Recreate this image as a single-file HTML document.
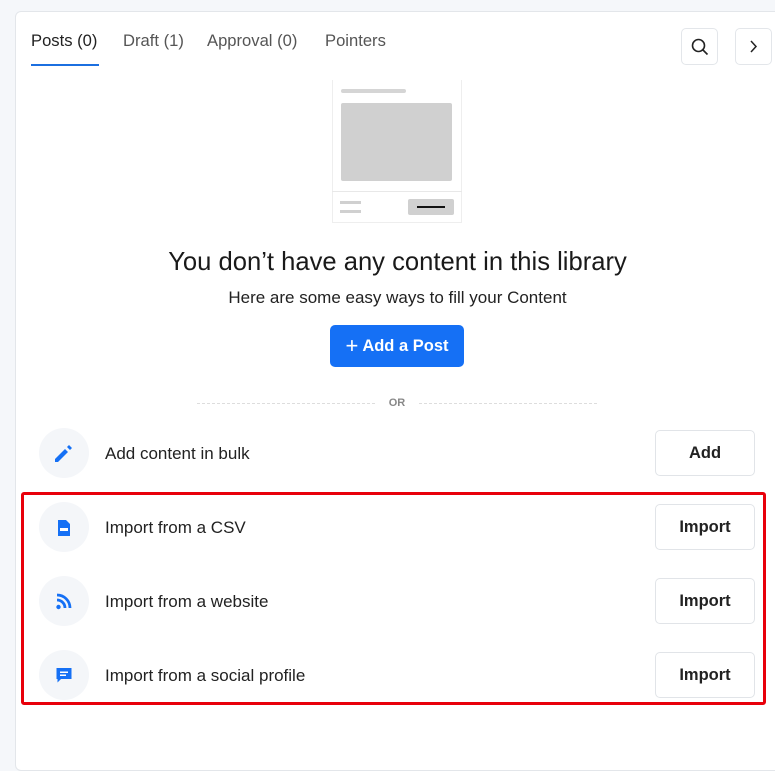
<!DOCTYPE html>
<html><head><meta charset="utf-8"><style>
*{box-sizing:border-box;margin:0;padding:0}
body{width:775px;height:715px;background:#f5f7fa;font-family:"Liberation Sans",sans-serif;position:relative;overflow:hidden;color:#1f1f1f}
.card{position:absolute;left:15px;top:11px;width:800px;height:760px;background:#fff;border:1px solid #e3e6ea;border-radius:6px}
.a{position:absolute}
.tab{position:absolute;top:31px;font-size:16.6px;color:#555}
.ib{position:absolute;width:37px;height:37px;border:1px solid #e3e6ea;border-radius:5px;background:#fff}
.circ{position:absolute;left:39px;width:50px;height:50px;border-radius:50%;background:#f4f6f9}
.lbl{position:absolute;left:105px;font-size:17px;color:#222}
.btn{position:absolute;left:655px;width:100px;height:46px;border:1px solid #e1e4e8;border-radius:5px;background:#fff;font-weight:bold;font-size:16.5px;text-align:center;line-height:44px;color:#222}
</style></head><body>
<div class="card"></div>
<div class="tab" style="left:31px;color:#222">Posts (0)</div>
<div class="tab" style="left:123px">Draft (1)</div>
<div class="tab" style="left:207px">Approval (0)</div>
<div class="tab" style="left:325px">Pointers</div>
<div class="a" style="left:31px;top:64px;width:68px;height:2px;background:#1b6fe0"></div>
<div class="ib" style="left:681px;top:28px"><svg width="37" height="37" viewBox="0 0 37 37" style="position:absolute;left:-1px;top:-1px"><circle cx="17.5" cy="17.5" r="6" fill="none" stroke="#222" stroke-width="1.6"/><path d="M22 22l4.5 4.5" stroke="#222" stroke-width="1.6"/></svg></div>
<div class="ib" style="left:735px;top:28px"><svg width="37" height="37" viewBox="0 0 37 37" style="position:absolute;left:-1px;top:-1px"><path d="M16 13l5 5.5-5 5.5" fill="none" stroke="#222" stroke-width="1.5"/></svg></div>
<div class="a" style="left:332px;top:80px;width:130px;height:143px;border:1px solid #eee;border-top:none;background:#fff"></div>
<div class="a" style="left:341px;top:89px;width:65px;height:4px;background:#d5d5d5;border-radius:2px"></div>
<div class="a" style="left:341px;top:103px;width:111px;height:78px;background:#d0d0d0;border-radius:2px"></div>
<div class="a" style="left:332px;top:191px;width:130px;height:1px;background:#e8e8e8"></div>
<div class="a" style="left:340px;top:201px;width:21px;height:3px;background:#d0d0d0"></div>
<div class="a" style="left:340px;top:210px;width:21px;height:3px;background:#d0d0d0"></div>
<div class="a" style="left:408px;top:199px;width:46px;height:16px;background:#d0d0d0;border-radius:2px"></div>
<div class="a" style="left:417px;top:206px;width:28px;height:2px;background:#111"></div>
<div class="a" style="left:0;width:795px;top:248px;text-align:center;font-size:25.6px;color:#1a1a1a">You don’t have any content in this library</div>
<div class="a" style="left:0;width:795px;top:288px;text-align:center;font-size:17px;color:#222">Here are some easy ways to fill your Content</div>
<div class="a" style="left:330px;top:325px;width:134px;height:42px;background:#1570f5;border-radius:5px;color:#fff;font-weight:bold;font-size:16.5px;text-align:center;line-height:42px"><span style="font-weight:normal;font-size:22px;vertical-align:-2px">+</span> Add a Post</div>
<div class="a" style="left:197px;top:403px;width:178px;border-top:1px dashed #ddd"></div>
<div class="a" style="left:419px;top:403px;width:178px;border-top:1px dashed #ddd"></div>
<div class="a" style="left:385px;top:397px;width:24px;text-align:center;font-size:11px;font-weight:bold;color:#888">OR</div>

<div class="circ" style="top:428px"><svg width="50" height="50" viewBox="0 0 50 50"><path d="M16 31v3h3l10-10-3-3zM31 22l2-2-3-3-2 2z" fill="#1570f5"/></svg></div>
<div class="lbl" style="top:444px">Add content in bulk</div>
<div class="btn" style="top:430px">Add</div>

<div class="a" style="left:21px;top:492px;width:745px;height:213px;border:3px solid #e8000b;border-radius:3px"></div>

<div class="circ" style="top:502px"><svg width="50" height="50" viewBox="0 0 50 50"><path d="M19 18h8l4 4v12h-12z" fill="#1570f5"/><rect x="21" y="26" width="8" height="3" fill="#fff"/></svg></div>
<div class="lbl" style="top:518px">Import from a CSV</div>
<div class="btn" style="top:504px">Import</div>

<div class="circ" style="top:576px"><svg width="50" height="50" viewBox="0 0 50 50"><circle cx="19.5" cy="31" r="2.2" fill="#1570f5"/><path d="M18 24a8 8 0 0 1 8 8M18 19a13 13 0 0 1 13 13" fill="none" stroke="#1570f5" stroke-width="2.8"/></svg></div>
<div class="lbl" style="top:592px">Import from a website</div>
<div class="btn" style="top:578px">Import</div>

<div class="circ" style="top:650px"><svg width="50" height="50" viewBox="0 0 50 50"><path d="M17.5 18h15v11h-10.5l-3.5 3.5v-3.5h-1z" fill="#1570f5"/><rect x="21" y="21.5" width="8" height="1.5" fill="#fff"/><rect x="21" y="24.5" width="6" height="1.5" fill="#fff"/></svg></div>
<div class="lbl" style="top:666px">Import from a social profile</div>
<div class="btn" style="top:652px">Import</div>
</body></html>
